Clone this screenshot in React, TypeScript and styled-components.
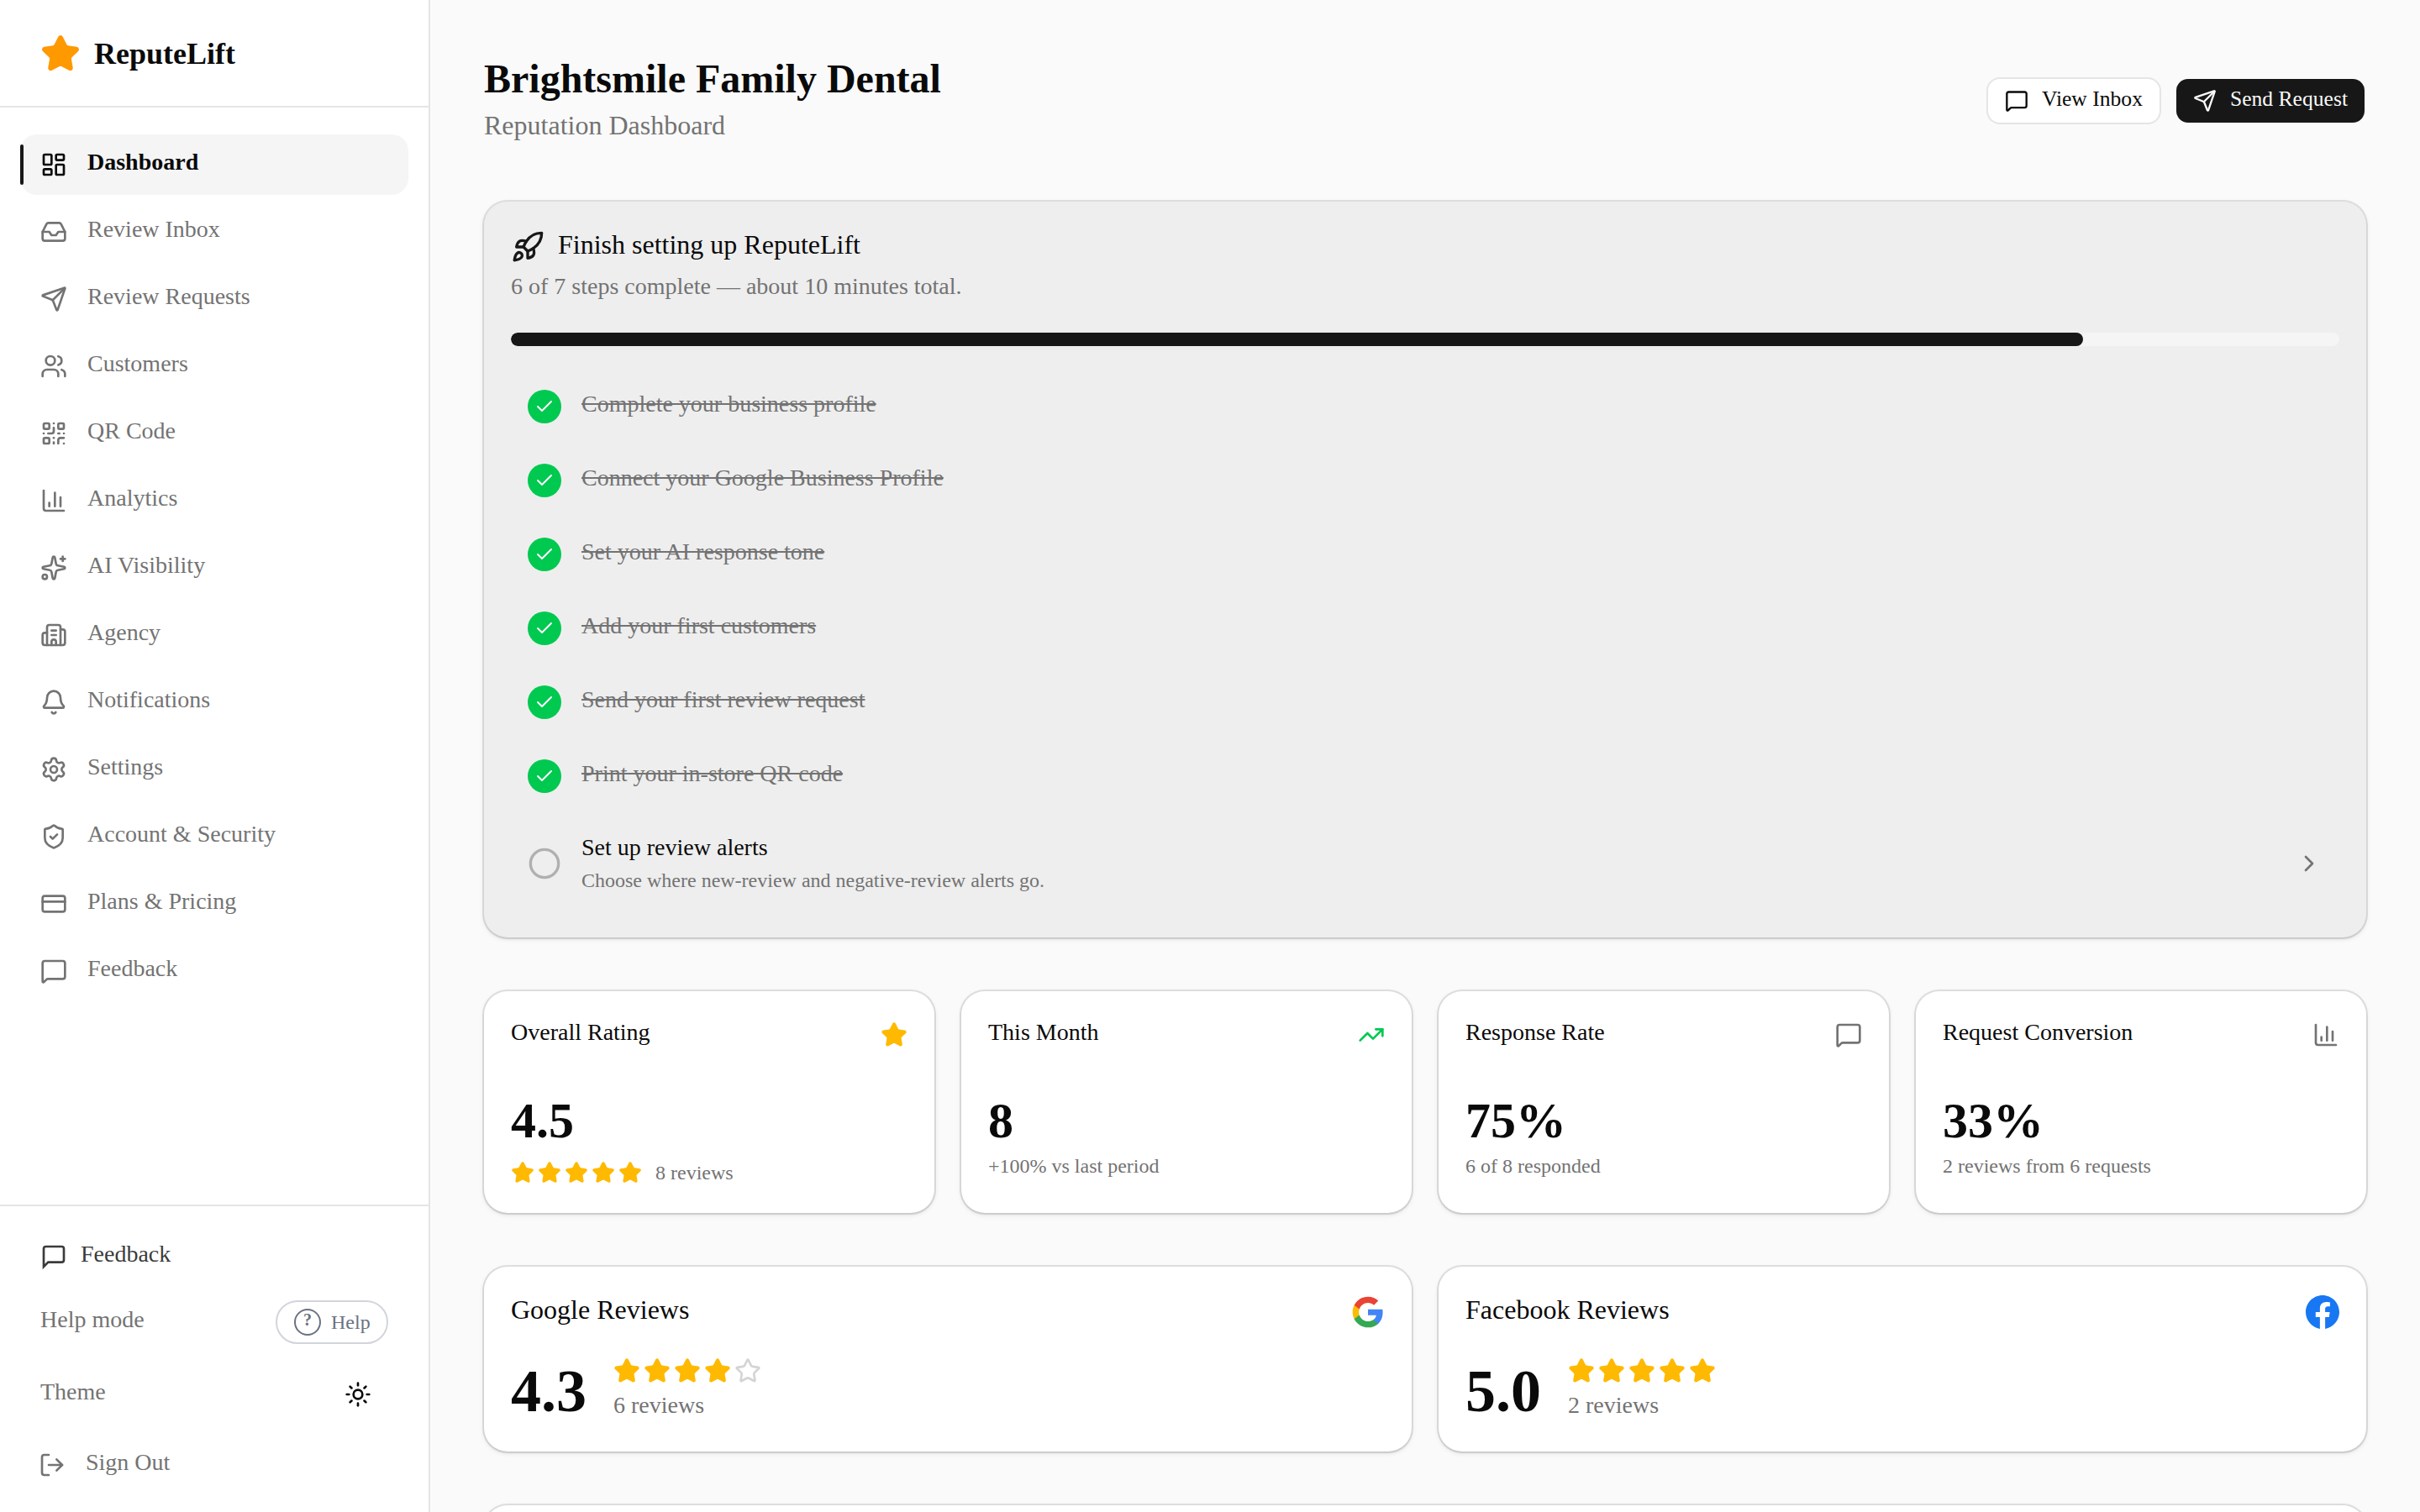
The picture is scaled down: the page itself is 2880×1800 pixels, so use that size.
import React from 'react';
import styled, { createGlobalStyle, css } from 'styled-components';
import {
  Bell,
  Building2,
  ChartColumn,
  Check,
  ChevronRight,
  Circle,
  CreditCard,
  Inbox,
  LayoutDashboard,
  LogOut,
  LucideIcon,
  MessageSquare,
  QrCode,
  Rocket,
  Send,
  Settings,
  ShieldCheck,
  Sparkles,
  Star,
  Sun,
  TrendingUp,
  Users,
} from 'lucide-react';

const colors = {
  text: '#0a0a0a',
  primary: '#171717',
  muted: '#737373',
  border: '#e5e5e5',
  surface: '#f5f5f5',
  page: '#fafafa',
  amber: '#ffb900',
  green: '#00c950',
};

// text sits slightly above the middle of its line box, `lift` is that offset
const textLine = (size: number, line: number, lift = 0) => css`
  font-size: ${size}px;
  line-height: ${line - lift * 2}px;
  padding-bottom: ${lift * 2}px;
`;

const GlobalStyle = createGlobalStyle`
  *, *::before, *::after {
    box-sizing: border-box;
  }
  body {
    margin: 0;
    background: ${colors.page};
    color: ${colors.text};
    font-family: 'Liberation Serif', 'Times New Roman', serif;
  }
  h1, h2, h3, p, ul {
    margin: 0;
    padding: 0;
    font-weight: 400;
  }
  button {
    font-family: inherit;
    cursor: pointer;
  }
  svg {
    display: block;
    flex-shrink: 0;
  }
`;

const Shell = styled.div`
  display: flex;
  height: 1800px;
  overflow: hidden;
`;

/* sidebar */

const Sidebar = styled.aside`
  display: flex;
  flex-direction: column;
  flex-shrink: 0;
  width: 512px;
  height: 100%;
  background: #fff;
  border-right: 2px solid ${colors.border};
`;

const Brand = styled.div`
  display: flex;
  align-items: center;
  gap: 16px;
  flex-shrink: 0;
  height: 128px;
  padding: 2px 48px 0;
  border-bottom: 2px solid ${colors.border};
`;

const BrandName = styled.span`
  ${textLine(36, 56)}
  font-weight: 700;
`;

const Nav = styled.nav`
  display: flex;
  flex: 1;
  flex-direction: column;
  gap: 8px;
  padding: 32px 24px;
`;

const NavItem = styled.a<{ $active?: boolean }>`
  position: relative;
  display: flex;
  align-items: center;
  gap: 24px;
  height: 72px;
  padding: 0 24px;
  border-radius: 20px;
  color: ${({ $active }) => ($active ? colors.text : colors.muted)};
  background: ${({ $active }) => ($active ? colors.surface : 'transparent')};
  font-weight: ${({ $active }) => ($active ? 700 : 400)};

  ${({ $active }) =>
    $active &&
    css`
      &::before {
        content: '';
        position: absolute;
        left: 0;
        top: 12px;
        width: 4px;
        height: 48px;
        border-radius: 2px;
        background: ${colors.primary};
      }
    `}
`;

const Label = styled.span`
  ${textLine(28, 40, 3)}
`;

const SidebarFooter = styled.div`
  display: flex;
  flex-direction: column;
  gap: 16px;
  padding: 24px;
  border-top: 2px solid ${colors.border};
`;

const FeedbackButton = styled.button`
  display: flex;
  align-items: center;
  gap: 16px;
  height: 72px;
  padding: 0 24px;
  border: 0;
  background: none;
  color: #3b3b3b;
`;

const FooterRow = styled.div<{ $spaced?: boolean }>`
  display: flex;
  align-items: center;
  justify-content: space-between;
  padding: 0 24px;
  margin-bottom: ${({ $spaced }) => ($spaced ? 8 : 0)}px;
  color: ${colors.muted};
`;

const HelpPill = styled.button`
  display: flex;
  align-items: center;
  gap: 12px;
  width: 134px;
  height: 52px;
  padding: 0 18px 0 20px;
  border: 2px solid #d1d5dc;
  border-radius: 26px;
  background: #fff;
  color: #6a7282;
  font-size: 24px;
  line-height: 32px;
`;

const HelpMark = styled.span`
  display: flex;
  flex-shrink: 0;
  justify-content: center;
  width: 32px;
  height: 32px;
  border: 2px solid currentColor;
  border-radius: 50%;
  font-size: 20px;
  font-weight: 700;
  line-height: 22px;
`;

const ThemeButton = styled.button`
  display: flex;
  align-items: center;
  justify-content: center;
  width: 72px;
  height: 72px;
  padding: 0;
  border: 0;
  background: none;
  color: ${colors.text};
`;

const SignOutButton = styled.button`
  display: flex;
  align-items: center;
  gap: 24px;
  height: 64px;
  padding: 0 22px;
  border: 0;
  background: none;
  color: ${colors.muted};
`;

/* main column */

const Main = styled.main`
  display: flex;
  flex: 1;
  flex-direction: column;
  gap: 64px;
  padding: 64px;
`;

const PageHeader = styled.header`
  display: flex;
  align-items: center;
  justify-content: space-between;
`;

const PageTitle = styled.h1`
  && {
    ${textLine(48, 64, 2)}
    font-weight: 700;
  }
`;

const PageSubtitle = styled.p`
  && {
    ${textLine(32, 48, 3)}
  }
  color: ${colors.muted};
`;

const Actions = styled.div`
  display: flex;
  gap: 16px;
`;

const ActionButton = styled.button<{ $primary?: boolean }>`
  display: flex;
  align-items: center;
  gap: 16px;
  height: 56px;
  padding: 0 20px;
  border: 2px solid ${({ $primary }) => ($primary ? 'transparent' : colors.border)};
  border-radius: 16px;
  background: ${({ $primary }) => ($primary ? colors.primary : '#fff')};
  background-clip: padding-box;
  color: ${({ $primary }) => ($primary ? '#fafafa' : colors.text)};

  span {
    ${textLine(25.6, 40, 2)}
  }
`;

const Card = styled.section<{ $tinted?: boolean }>`
  flex-shrink: 0;
  padding: 32px;
  border-radius: 28px;
  background: ${({ $tinted }) => ($tinted ? '#eeeeee' : '#fff')};
  box-shadow:
    0 0 0 2px rgba(10, 10, 10, 0.1),
    0 2px 6px rgba(0, 0, 0, 0.1),
    0 2px 4px -2px rgba(0, 0, 0, 0.1);
`;

const CardTitle = styled.h2`
  && {
    ${textLine(32, 44, 3)}
  }
`;

const SetupHeading = styled.div`
  display: flex;
  align-items: center;
  gap: 16px;
  margin-bottom: 8px;

  svg {
    color: ${colors.primary};
  }
`;

const SetupSummary = styled.p`
  && {
    ${textLine(28, 40, 3)}
  }
  color: ${colors.muted};
`;

const ProgressTrack = styled.div`
  height: 16px;
  margin: 32px 0;
  border-radius: 8px;
  background: ${colors.surface};
  overflow: hidden;
`;

const ProgressFill = styled.div`
  height: 100%;
  border-radius: 8px;
  background: ${colors.primary};
`;

const StepList = styled.ul`
  display: flex;
  flex-direction: column;
  gap: 8px;
  list-style: none;
`;

const Step = styled.li`
  display: flex;
  align-items: center;
  gap: 24px;
  padding: 20px;
  color: ${colors.muted};
`;

const StepBadge = styled.span`
  display: flex;
  align-items: center;
  justify-content: center;
  width: 40px;
  height: 40px;
  border-radius: 50%;
  background: ${colors.green};
  color: #fff;
`;

const StepBody = styled.div`
  flex: 1;
`;

const StepTitle = styled.p<{ $done?: boolean }>`
  && {
    ${textLine(28, 40, 3)}
  }
  color: ${({ $done }) => ($done ? colors.muted : colors.text)};
  text-decoration: ${({ $done }) => ($done ? 'line-through' : 'none')};
`;

const Caption = styled.p`
  font-size: 24px;
  line-height: 32px;
  color: ${colors.muted};
`;

const Grid = styled.div<{ $columns: number }>`
  display: grid;
  grid-template-columns: repeat(${({ $columns }) => $columns}, 1fr);
  gap: 32px;
`;

const CardTop = styled.div<{ $gap: number }>`
  display: flex;
  align-items: center;
  justify-content: space-between;
  margin-bottom: ${({ $gap }) => $gap}px;
`;

const StatValue = styled.div`
  ${textLine(60, 72, 2)}
  font-weight: 700;
`;

const StatRating = styled.div`
  display: flex;
  align-items: center;
  gap: 16px;
  margin-top: 8px;
`;

const StarRow = styled.div`
  display: flex;
  gap: 4px;
`;

const Platform = styled.div`
  display: flex;
  align-items: center;
  gap: 32px;
`;

const PlatformScore = styled.div`
  font-size: 72px;
  line-height: 80px;
  font-weight: 700;
`;

const PlatformMeta = styled.div`
  display: flex;
  flex-direction: column;
  gap: 8px;
  color: ${colors.muted};
`;

const NextCard = styled(Card)`
  height: 400px;
`;

const SpeechBubble: React.FC = () => (
  <svg
    width="32"
    height="32"
    viewBox="0 0 24 24"
    fill="none"
    stroke="currentColor"
    strokeWidth="2"
  >
    <path d="M21 15a2 2 0 0 1-2 2H7l-4 4V5a2 2 0 0 1 2-2h14a2 2 0 0 1 2 2z" />
  </svg>
);

const GoogleLogo: React.FC = () => (
  <svg width="40" height="40" viewBox="0 0 24 24">
    <path
      fill="#4285F4"
      d="M22.56 12.25c0-.78-.07-1.53-.2-2.25H12v4.26h5.92c-.26 1.37-1.04 2.53-2.21 3.31v2.77h3.57c2.08-1.92 3.28-4.74 3.28-8.09z"
    />
    <path
      fill="#34A853"
      d="M12 23c2.97 0 5.46-.98 7.28-2.66l-3.57-2.77c-.98.66-2.23 1.06-3.71 1.06-2.86 0-5.29-1.93-6.16-4.53H2.18v2.84C3.99 20.53 7.7 23 12 23z"
    />
    <path
      fill="#FBBC05"
      d="M5.84 14.09c-.22-.66-.35-1.36-.35-2.09s.13-1.43.35-2.09V7.07H2.18C1.43 8.55 1 10.22 1 12s.43 3.45 1.18 4.93l2.85-2.22.81-.62z"
    />
    <path
      fill="#EA4335"
      d="M12 5.38c1.62 0 3.06.56 4.21 1.64l3.15-3.15C17.45 2.09 14.97 1 12 1 7.7 1 3.99 3.47 2.18 7.07l3.66 2.84c.87-2.6 3.3-4.53 6.16-4.53z"
    />
  </svg>
);

const FacebookLogo: React.FC = () => (
  <svg width="40" height="40" viewBox="0 0 24 24">
    <path
      fill="#1877F2"
      d="M24 12.073c0-6.627-5.373-12-12-12s-12 5.373-12 12c0 5.99 4.388 10.954 10.125 11.854v-8.385H7.078v-3.47h3.047V9.43c0-3.007 1.792-4.669 4.533-4.669 1.312 0 2.686.235 2.686.235v2.953H15.83c-1.491 0-1.956.925-1.956 1.874v2.25h3.328l-.532 3.47h-2.796v8.385C19.612 23.027 24 18.062 24 12.073z"
    />
  </svg>
);

const Stars: React.FC<{ count: number; size: number }> = ({ count, size }) => (
  <StarRow>
    {[1, 2, 3, 4, 5].map((n) => (
      <Star
        key={n}
        size={size}
        color={n <= count ? colors.amber : '#d4d4d4'}
        fill={n <= count ? colors.amber : 'none'}
      />
    ))}
  </StarRow>
);

const navItems: { label: string; icon: LucideIcon }[] = [
  { label: 'Dashboard', icon: LayoutDashboard },
  { label: 'Review Inbox', icon: Inbox },
  { label: 'Review Requests', icon: Send },
  { label: 'Customers', icon: Users },
  { label: 'QR Code', icon: QrCode },
  { label: 'Analytics', icon: ChartColumn },
  { label: 'AI Visibility', icon: Sparkles },
  { label: 'Agency', icon: Building2 },
  { label: 'Notifications', icon: Bell },
  { label: 'Settings', icon: Settings },
  { label: 'Account & Security', icon: ShieldCheck },
  { label: 'Plans & Pricing', icon: CreditCard },
  { label: 'Feedback', icon: MessageSquare },
];

const doneSteps = [
  'Complete your business profile',
  'Connect your Google Business Profile',
  'Set your AI response tone',
  'Add your first customers',
  'Send your first review request',
  'Print your in-store QR code',
];

const stats = [
  {
    title: 'Overall Rating',
    value: '4.5',
    note: '8 reviews',
    rating: 5,
    icon: <Star size={32} color={colors.amber} fill={colors.amber} />,
  },
  {
    title: 'This Month',
    value: '8',
    note: '+100% vs last period',
    icon: <TrendingUp size={32} color={colors.green} />,
  },
  {
    title: 'Response Rate',
    value: '75%',
    note: '6 of 8 responded',
    icon: <MessageSquare size={32} color={colors.muted} />,
  },
  {
    title: 'Request Conversion',
    value: '33%',
    note: '2 reviews from 6 requests',
    icon: <ChartColumn size={32} color={colors.muted} />,
  },
];

const platforms = [
  { title: 'Google Reviews', score: '4.3', stars: 4, note: '6 reviews', logo: <GoogleLogo /> },
  { title: 'Facebook Reviews', score: '5.0', stars: 5, note: '2 reviews', logo: <FacebookLogo /> },
];

const App: React.FC = () => {
  const progress = Math.round((doneSteps.length / 7) * 100);

  return (
    <Shell>
      <GlobalStyle />
      <Sidebar>
        <Brand>
          <Star size={48} color="#ff9900" fill="#ff9900" />
          <BrandName>ReputeLift</BrandName>
        </Brand>
        <Nav>
          {navItems.map(({ label, icon: Icon }, i) => (
            <NavItem key={label} $active={i === 0}>
              <Icon size={32} />
              <Label>{label}</Label>
            </NavItem>
          ))}
        </Nav>
        <SidebarFooter>
          <FeedbackButton>
            <SpeechBubble />
            <Label>Feedback</Label>
          </FeedbackButton>
          <FooterRow $spaced>
            <Label>Help mode</Label>
            <HelpPill>
              <HelpMark>?</HelpMark>
              Help
            </HelpPill>
          </FooterRow>
          <FooterRow>
            <Label>Theme</Label>
            <ThemeButton>
              <Sun size={32} />
            </ThemeButton>
          </FooterRow>
          <SignOutButton>
            <LogOut size={32} />
            <Label>Sign Out</Label>
          </SignOutButton>
        </SidebarFooter>
      </Sidebar>

      <Main>
        <PageHeader>
          <div>
            <PageTitle>Brightsmile Family Dental</PageTitle>
            <PageSubtitle>Reputation Dashboard</PageSubtitle>
          </div>
          <Actions>
            <ActionButton>
              <MessageSquare size={28} />
              <span>View Inbox</span>
            </ActionButton>
            <ActionButton $primary>
              <Send size={28} />
              <span>Send Request</span>
            </ActionButton>
          </Actions>
        </PageHeader>

        <Card $tinted>
          <SetupHeading>
            <Rocket size={40} />
            <CardTitle>Finish setting up ReputeLift</CardTitle>
          </SetupHeading>
          <SetupSummary>6 of 7 steps complete — about 10 minutes total.</SetupSummary>
          <ProgressTrack>
            <ProgressFill style={{ width: `${progress}%` }} />
          </ProgressTrack>
          <StepList>
            {doneSteps.map((step) => (
              <Step key={step}>
                <StepBadge>
                  <Check size={24} />
                </StepBadge>
                <StepTitle $done>{step}</StepTitle>
              </Step>
            ))}
            <Step>
              <Circle size={40} color="#b0b0b0" />
              <StepBody>
                <StepTitle>Set up review alerts</StepTitle>
                <Caption>Choose where new-review and negative-review alerts go.</Caption>
              </StepBody>
              <ChevronRight size={32} />
            </Step>
          </StepList>
        </Card>

        <Grid $columns={4}>
          {stats.map((stat) => (
            <Card key={stat.title}>
              <CardTop $gap={48}>
                <Label>{stat.title}</Label>
                {stat.icon}
              </CardTop>
              <StatValue>{stat.value}</StatValue>
              {stat.rating ? (
                <StatRating>
                  <Stars count={stat.rating} size={28} />
                  <Caption>{stat.note}</Caption>
                </StatRating>
              ) : (
                <Caption>{stat.note}</Caption>
              )}
            </Card>
          ))}
        </Grid>

        <Grid $columns={2}>
          {platforms.map((platform) => (
            <Card key={platform.title}>
              <CardTop $gap={32}>
                <CardTitle>{platform.title}</CardTitle>
                {platform.logo}
              </CardTop>
              <Platform>
                <PlatformScore>{platform.score}</PlatformScore>
                <PlatformMeta>
                  <Stars count={platform.stars} size={32} />
                  <Label>{platform.note}</Label>
                </PlatformMeta>
              </Platform>
            </Card>
          ))}
        </Grid>

        <NextCard />
      </Main>
    </Shell>
  );
};

export default App;
